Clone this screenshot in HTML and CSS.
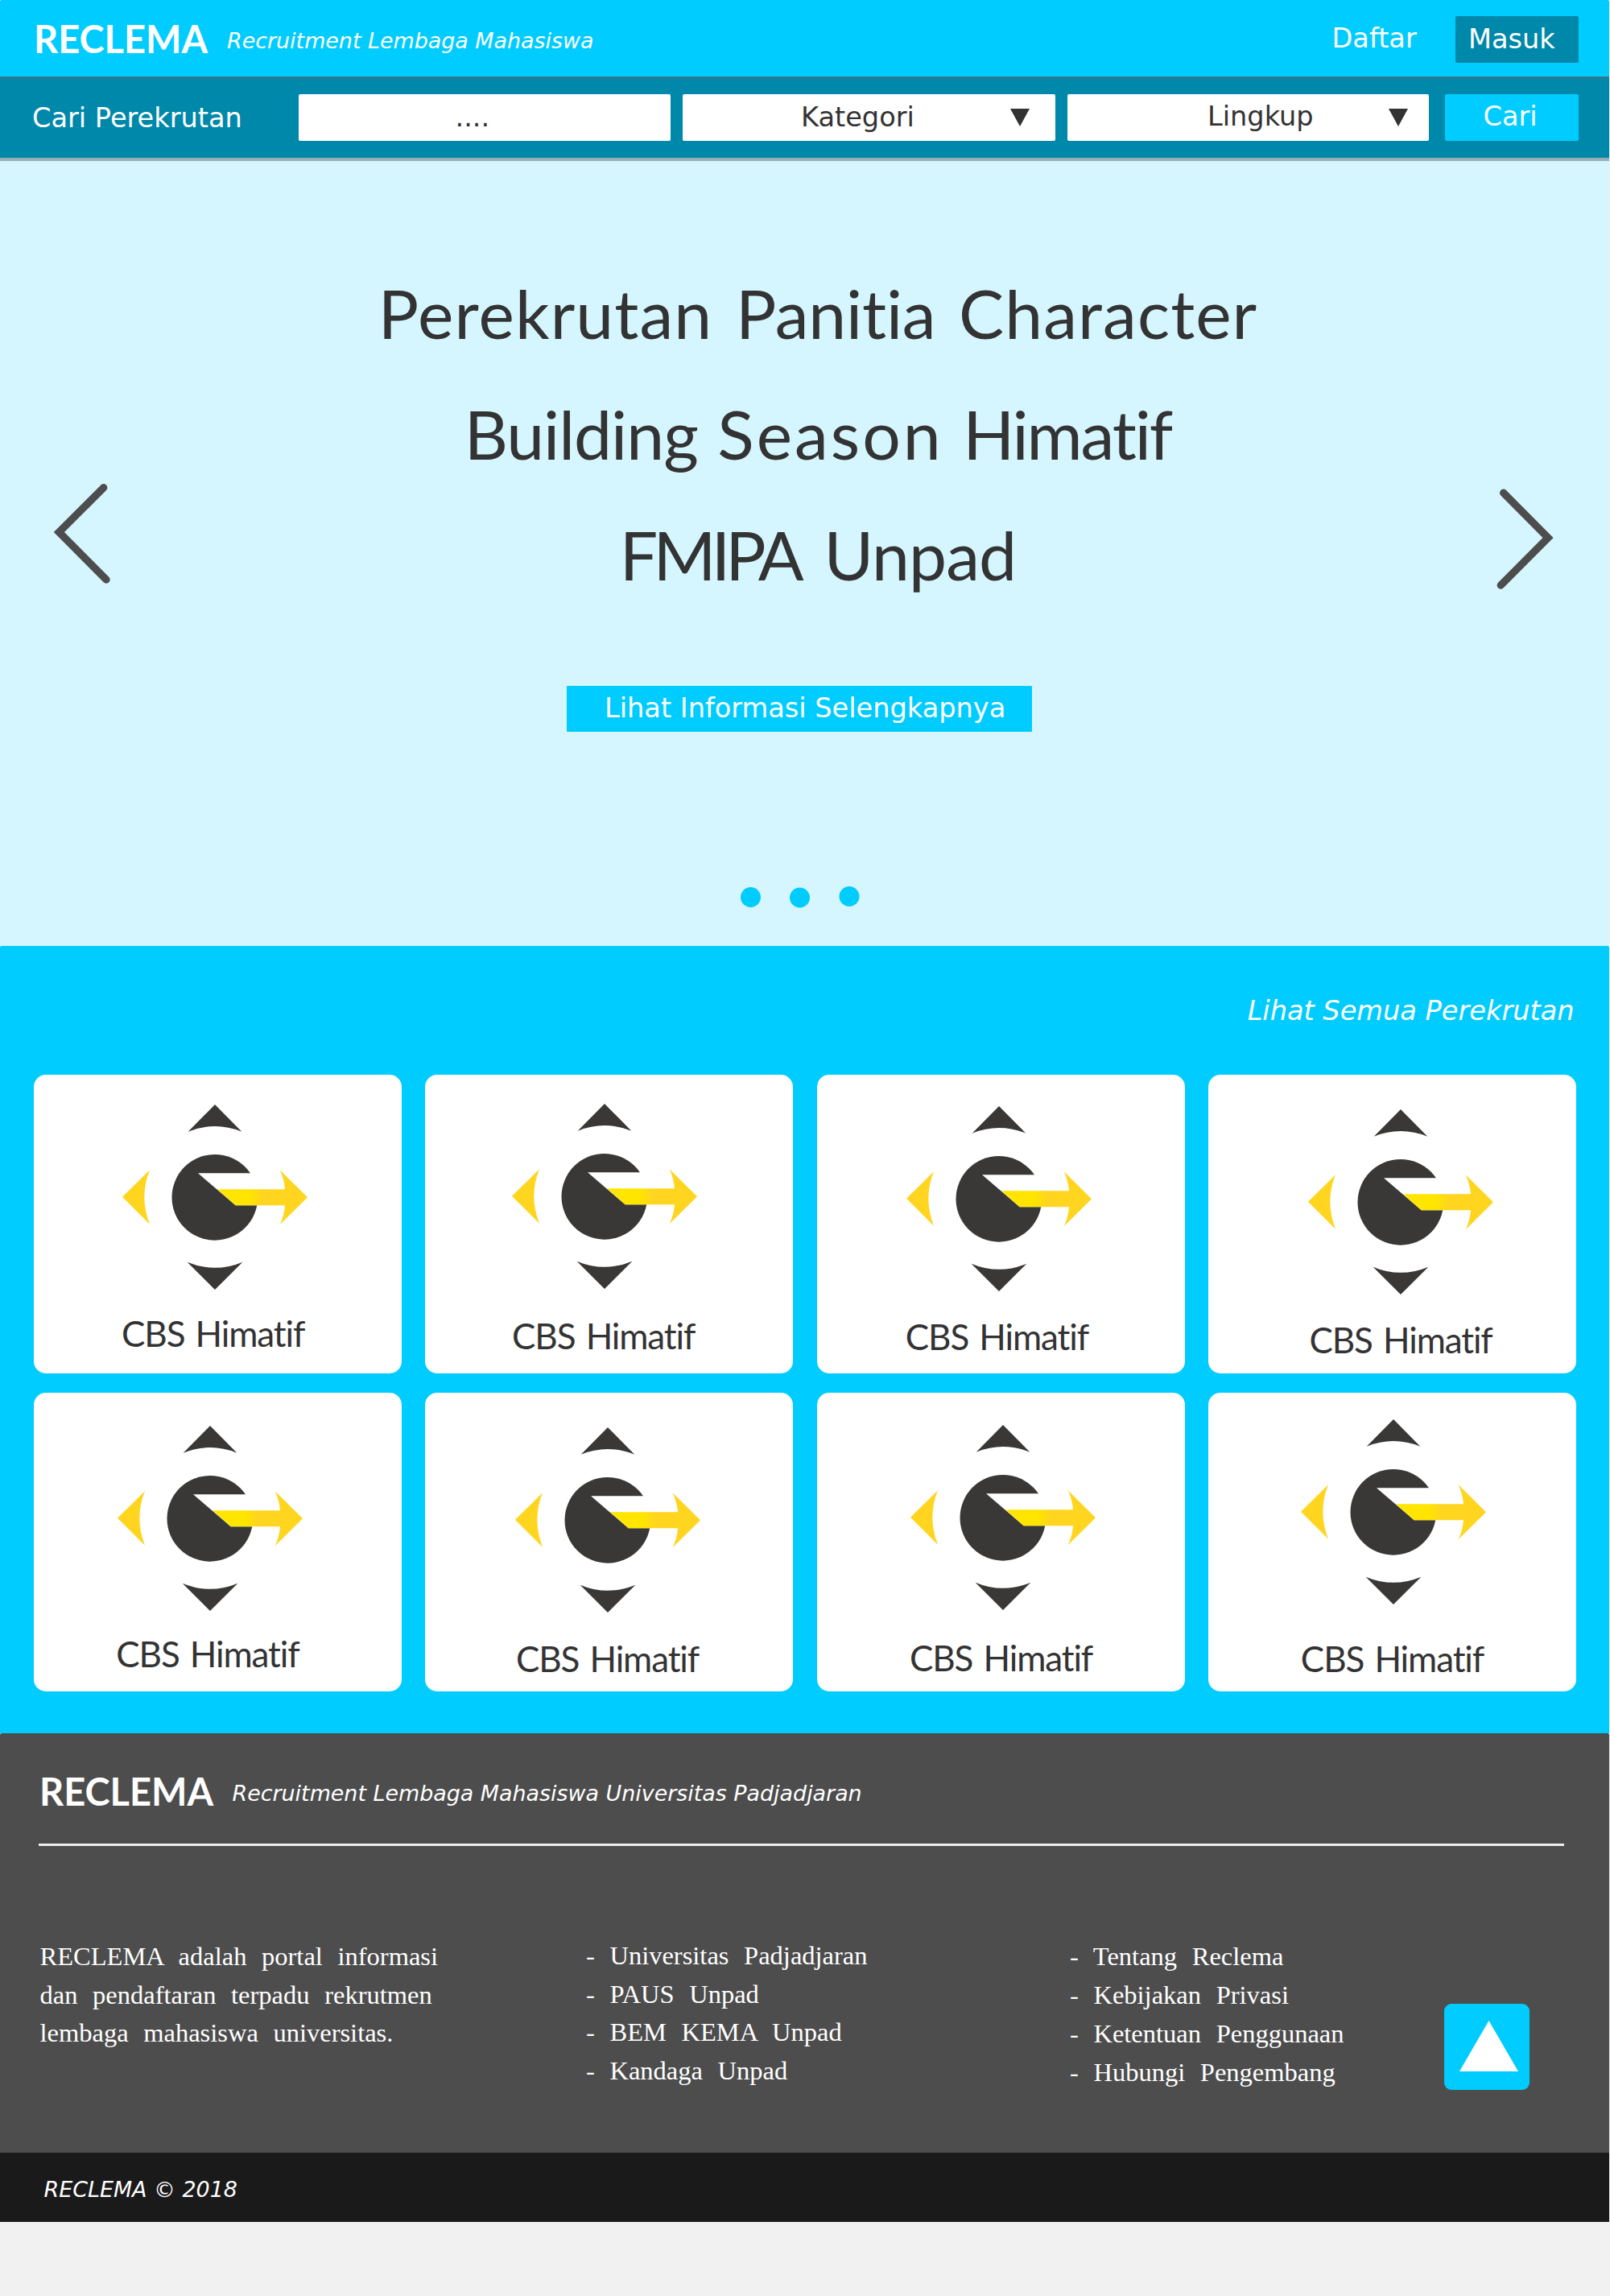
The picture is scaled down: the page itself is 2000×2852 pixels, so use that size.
FILE: index.html
```html
<!DOCTYPE html>
<html lang="id">
<head>
<meta charset="utf-8">
<title>RECLEMA</title>
<link rel="stylesheet" href="styles.css">
</head>
<body>
<svg width="0" height="0" class="defs" aria-hidden="true">
  <defs>
    <linearGradient id="beam" gradientUnits="userSpaceOnUse" x1="475" y1="0" x2="525" y2="0">
      <stop offset="0" stop-color="#ffe500"/>
      <stop offset="1" stop-color="#ffd520"/>
    </linearGradient>
    <symbol id="compass" viewBox="0 0 690 690">
      <path fill="#393836" d="M345 0 445 101Q345 61 245 101Z"/>
      <path fill="#393836" d="M345 690 242 587Q345 630 448 587Z"/>
      <path fill="#ffd520" d="M0 344 102 244Q62 344 102 446Z"/>
      <circle cx="344.500" cy="346" r="160" fill="#393836"/>
      <path fill="#fff" d="M282 256H520V376H422Z"/>
      <path fill="url(#beam)" d="M354 316H606Q603 279 587 244L690 346 587 448Q603 414 606 376H422Z"/>
    </symbol>
  </defs>
</svg>
<div class="page">
  <header class="topbar">
    <div class="brand">RECLEMA</div>
    <div class="tagline">Recruitment Lembaga Mahasiswa</div>
    <nav class="account">
      <a class="register">Daftar</a>
      <a class="login">Masuk</a>
    </nav>
  </header>

  <form class="search">
    <label class="search-label">Cari Perekrutan</label>
    <div class="field field-query">....</div>
    <div class="field field-category">Kategori
      <svg class="caret" viewBox="0 0 24 22"><path d="M0 0H24L12 22Z"/></svg>
    </div>
    <div class="field field-scope">Lingkup
      <svg class="caret" viewBox="0 0 24 22"><path d="M0 0H24L12 22Z"/></svg>
    </div>
    <div class="search-button">Cari</div>
  </form>

  <section class="hero">
    <svg class="arrow arrow-prev" viewBox="0 0 90 140"><path d="M68.700 10.700 13.400 66 72 125"/></svg>
    <div class="slide">
      <h1 class="slide-title">
        <span class="line line-1">Perekrutan <span class="snug">Panitia</span> Character</span>
        <span class="line line-2">Building <span class="loose">Season</span> <span class="tight">Himatif</span></span>
        <span class="line line-3"><span class="acronym">FMIPA</span> Unpad</span>
      </h1>
      <a class="slide-button">Lihat Informasi Selengkapnya</a>
      <svg class="dots" viewBox="0 0 160 30"><circle cx="17.500" cy="15.500" r="12.500"/><circle cx="78.500" cy="16" r="12.500"/><circle cx="140" cy="14.500" r="12.500"/></svg>
    </div>
    <svg class="arrow arrow-next" viewBox="0 0 90 140"><path d="M17.700 17.300 73 73 14.300 132"/></svg>
  </section>

  <section class="listing">
    <a class="see-all">Lihat Semua Perekrutan</a>
    <div class="cards">
      <article class="card card-1"><svg class="logo"><use href="#compass"/></svg><h2 class="name">CBS Himatif</h2></article>
      <article class="card card-2"><svg class="logo"><use href="#compass"/></svg><h2 class="name">CBS Himatif</h2></article>
      <article class="card card-3"><svg class="logo"><use href="#compass"/></svg><h2 class="name">CBS Himatif</h2></article>
      <article class="card card-4"><svg class="logo"><use href="#compass"/></svg><h2 class="name">CBS Himatif</h2></article>
      <article class="card card-5"><svg class="logo"><use href="#compass"/></svg><h2 class="name">CBS Himatif</h2></article>
      <article class="card card-6"><svg class="logo"><use href="#compass"/></svg><h2 class="name">CBS Himatif</h2></article>
      <article class="card card-7"><svg class="logo"><use href="#compass"/></svg><h2 class="name">CBS Himatif</h2></article>
      <article class="card card-8"><svg class="logo"><use href="#compass"/></svg><h2 class="name">CBS Himatif</h2></article>
    </div>
  </section>

  <footer class="footer">
    <div class="footer-head">
      <div class="brand">RECLEMA</div>
      <div class="tagline">Recruitment Lembaga Mahasiswa Universitas Padjadjaran</div>
    </div>
    <div class="footer-body">
      <p class="about">RECLEMA adalah portal informasi<br>dan pendaftaran terpadu rekrutmen<br>lembaga mahasiswa universitas.</p>
      <ul class="links links-campus">
        <li>- Universitas Padjadjaran</li>
        <li>- PAUS Unpad</li>
        <li>- BEM KEMA Unpad</li>
        <li>- Kandaga Unpad</li>
      </ul>
      <ul class="links links-site">
        <li>- Tentang Reclema</li>
        <li>- Kebijakan Privasi</li>
        <li>- Ketentuan Penggunaan</li>
        <li>- Hubungi Pengembang</li>
      </ul>
      <a class="to-top"><svg viewBox="0 0 106 106"><path d="M55.500 21 92 84H19Z"/></svg></a>
    </div>
  </footer>
  <div class="copyright">RECLEMA © 2018</div>
</div>
</body>
</html>
```

FILE: styles.css
```css
* { box-sizing: border-box; }

body {
  margin: 0;
  background: #f1f1f1;
  font: 33.6px/40px "DejaVu Sans", sans-serif;
  color: #333;
}

h1, h2, p, ul { margin: 0; padding: 0; font-weight: 400; }
ul { list-style: none; }
svg { display: block; flex: none; }
.defs { position: absolute; }

.page { width: 1999px; height: 2852px; }

/* Top bar */
.topbar {
  display: flex;
  align-items: flex-start;
  height: 95px;
  padding-left: 42px;
  background: #0cf;
  border-radius: 2px 2px 0 0;
  color: #fff;
}
.brand {
  width: 240px;
  font: 700 47px/40px Lato, sans-serif;
}
.tagline { font-size: 26.9px; font-style: italic; white-space: nowrap; }
.topbar .brand { margin-top: 28px; }
.topbar .tagline { margin-top: 30.7px; }
.account { display: flex; margin: 20px 38px 0 auto; }
.register { width: 153.5px; padding-top: 8px; }
.login {
  width: 153px;
  height: 58px;
  padding: 9px 0 0 16px;
  background: #08a;
  border-radius: 2px;
}

/* Search bar */
.search {
  display: flex;
  align-items: flex-start;
  height: 105px;
  padding: 19px 38px 0 40px;
  background: #08a;
  border-top: 3px solid #2c7b8f;
  border-bottom: 4px solid #99aeb4;
}
.search-label { width: 330.5px; padding-top: 10px; color: #fff; }
.field {
  display: flex;
  align-items: flex-start;
  justify-content: space-between;
  height: 58px;
  background: #fff;
  border-radius: 2px;
}
.field-query { width: 462.5px; padding: 9px 0 0 195px; }
.field-category { width: 463px; margin-left: 15px; padding: 9px 32px 0 147px; }
.field-scope { width: 449px; margin-left: 15px; padding: 8px 26px 0 174px; }
.caret { width: 24px; height: 22px; fill: #333; }
.field-category .caret { margin-top: 9px; }
.field-scope .caret { margin-top: 10px; }
.search-button {
  width: 166px;
  height: 58px;
  margin-left: 20px;
  padding: 8px 0 0 47.5px;
  background: #0cf;
  border-radius: 2px;
  color: #fff;
}

/* Hero carousel */
.hero { display: flex; align-items: flex-start; height: 974.5px; background: #d5f6ff; }
.arrow {
  width: 90px;
  height: 140px;
  margin-top: 395px;
  fill: none;
  stroke: #4d4d4d;
  stroke-width: 9.4;
  stroke-linecap: round;
}
.arrow-prev { margin-left: 60px; }
.arrow-next { margin-right: 59px; }
.slide { flex: 1; padding-top: 114px; }
.slide-title {
  padding-left: 32px;
  font: 84px/150px Lato, sans-serif;
  font-variant-ligatures: none;
  text-align: center;
}
.line { display: block; white-space: nowrap; }
.line-1 { letter-spacing: 1.1px; word-spacing: 6px; }
.line-2 { letter-spacing: -1px; word-spacing: 4px; }
.line-3 { letter-spacing: -.9px; word-spacing: 10px; }
.snug { letter-spacing: -.2px; }
.loose { letter-spacing: 3px; }
.tight { letter-spacing: -2.1px; }
.acronym { letter-spacing: -5.8px; }
.slide-button {
  display: block;
  width: 578px;
  height: 57px;
  margin: 88px 0 0 554px;
  padding: 8px 0 0 47px;
  background: #0cf;
  border-radius: 1px;
  color: #fff;
  white-space: nowrap;
}
.dots { width: 160px; height: 30px; margin: 190px 0 0 765px; fill: #0cf; }

/* Recruitment cards */
.listing {
  height: 978px;
  padding: 61.5px 0 0 42px;
  background: #0cf;
  border-radius: 2px 2px 0 0;
}
.see-all {
  display: block;
  padding-right: 43.5px;
  color: #fff;
  font-style: italic;
  text-align: right;
}
.cards {
  display: grid;
  grid-template-columns: repeat(4, 457px);
  grid-auto-rows: 371px;
  gap: 24px 29.4px;
  margin-top: 59px;
}
.card { background: #fff; border-radius: 15px; overflow: hidden; }
.logo { width: 230px; height: 230px; margin: var(--logo-y) 0 0 var(--logo-x); }
.name {
  margin: var(--name-gap) 0 0 var(--name-x);
  font: 44px/44px Lato, sans-serif;
  font-variant-ligatures: none;
  letter-spacing: -1.1px;
  word-spacing: 3px;
  white-space: nowrap;
}
.card-1 { --logo-x: 110.3px; --logo-y: 37px;   --name-x: 109px;   --name-gap: 32.2px; }
.card-2 { --logo-x: 107.6px; --logo-y: 36.3px; --name-x: 107.7px; --name-gap: 36.2px; }
.card-3 { --logo-x: 111px;   --logo-y: 38.5px; --name-x: 110px;   --name-gap: 34px; }
.card-4 { --logo-x: 124.1px; --logo-y: 43.1px; --name-x: 125.3px; --name-gap: 34.4px; }
.card-5 { --logo-x: 103.7px; --logo-y: 41px;   --name-x: 102.3px; --name-gap: 31.2px; }
.card-6 { --logo-x: 111.4px; --logo-y: 43px;   --name-x: 112.5px; --name-gap: 34.5px; }
.card-7 { --logo-x: 116.4px; --logo-y: 39.7px; --name-x: 115.2px; --name-gap: 37.8px; }
.card-8 { --logo-x: 114.6px; --logo-y: 32.5px; --name-x: 114.7px; --name-gap: 45px; }

/* Footer */
.footer {
  height: 521px;
  padding: 0 56px 0 48px;
  background: #4d4d4d;
  border-radius: 2px 2px 0 0;
  color: #fff;
}
.footer-head {
  display: flex;
  align-items: flex-start;
  height: 140.5px;
  border-bottom: 3px solid #eee;
}
.footer-head .brand { width: 239.5px; margin: 52px 0 0 1px; }
.footer-head .tagline { margin-top: 55.2px; }
.footer-body {
  display: flex;
  align-items: flex-start;
  padding: 114px 0 0 1.5px;
  font: 32.5px/47.7px "Liberation Serif", serif;
  word-spacing: 10.5px;
  white-space: nowrap;
}
.about { width: 678.5px; }
.links-campus { width: 601px; margin-top: -1.2px; }
.links-site { width: 465px; margin-top: .4px; }
.to-top {
  width: 106px;
  height: 106.5px;
  margin-top: 82px;
  background: #0cf;
  border-radius: 9px;
}
.to-top svg { width: 106px; height: 106px; fill: #fff; }

.copyright {
  height: 86.2px;
  padding: 26.2px 0 0 54.5px;
  background: #1a1a1a;
  color: #fff;
  font-size: 26.9px;
  font-style: italic;
}
```
